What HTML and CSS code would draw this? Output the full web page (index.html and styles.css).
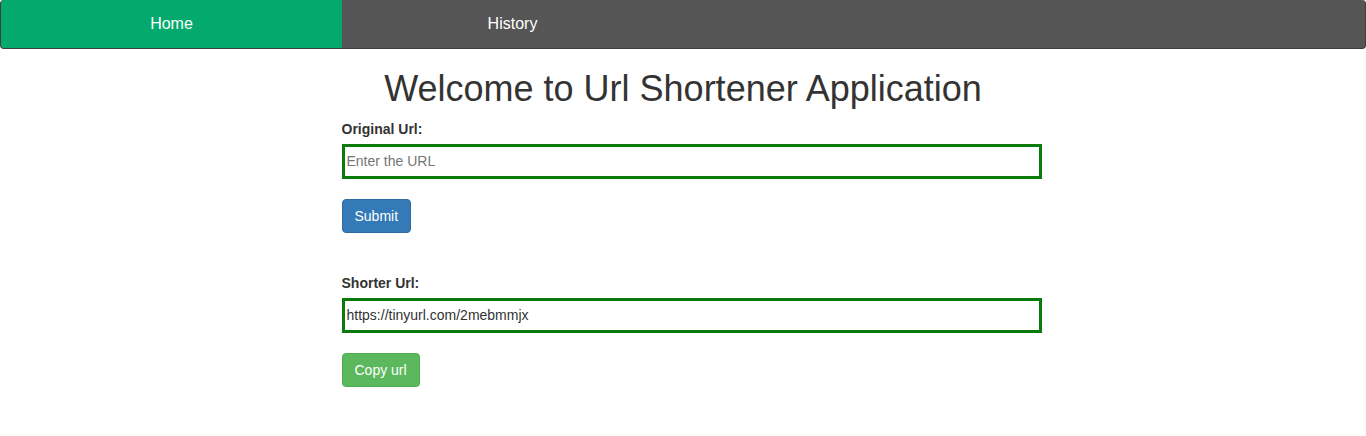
FILE: index.html
```html
<!DOCTYPE html>
<html>
<head>
<meta charset="utf-8">
<title>Url Shortener</title>
<link rel="stylesheet" href="styles.css">
</head>
<body>
<nav class="topnav">
  <a class="nav-link active" href="#">Home</a>
  <a class="nav-link" href="#">History</a>
</nav>
<h1 class="title">Welcome to Url Shortener Application</h1>
<main class="form">
  <label class="label" for="orig">Original Url:</label>
  <input class="field" id="orig" type="text" placeholder="Enter the URL">
  <button class="btn btn-primary" type="button">Submit</button>
  <label class="label label-second" for="short">Shorter Url:</label>
  <input class="field" id="short" type="text" value="https://tinyurl.com/2mebmmjx">
  <button class="btn btn-success" type="button">Copy url</button>
</main>
</body>
</html>
```
FILE: styles.css
```css
* { box-sizing: border-box; }
body {
  margin: 0;
  font-family: "Liberation Sans", Arial, sans-serif;
  font-size: 14px;
  line-height: 20px;
  color: #333;
  background: #fff;
}
.topnav {
  display: flex;
  height: 49px;
  background: #555;
  border: 1px solid #3f3f3f;
  border-top: 0;
  border-radius: 4px;
  overflow: hidden;
}
.nav-link {
  width: 25%;
  flex: none;
  text-align: center;
  color: #fff;
  text-decoration: none;
  font-size: 16px;
  line-height: 20px;
  padding: 14px 0;
}
.nav-link.active { background: #04aa6d; }
.title {
  margin: 20px 0 10px;
  text-align: center;
  font-size: 36px;
  font-weight: 500;
  line-height: 39.6px;
  color: #333;
}
.form {
  margin-left: 25%;
  width: 700px;
  display: flex;
  flex-direction: column;
  align-items: flex-start;
}
.label {
  font-weight: bold;
  font-size: 14px;
  line-height: 20px;
  margin-bottom: 5px;
}
.label-second { margin-top: 40px; }
.field {
  width: 700px;
  height: 35px;
  border: 3px solid #0a7a0a;
  padding: 0 2px;
  font-family: "Liberation Sans", Arial, sans-serif;
  font-size: 14px;
  color: #333;
  outline: none;
}
.field::placeholder { color: #757575; }
.btn {
  margin-top: 20px;
  height: 34px;
  padding: 6px 12px;
  font-family: "Liberation Sans", Arial, sans-serif;
  font-size: 14px;
  line-height: 20px;
  color: #fff;
  border: 1px solid transparent;
  border-radius: 4px;
  cursor: pointer;
}
.btn-primary { background: #337ab7; border-color: #2e6da4; }
.btn-success { background: #5cb85c; border-color: #4cae4c; }
```
